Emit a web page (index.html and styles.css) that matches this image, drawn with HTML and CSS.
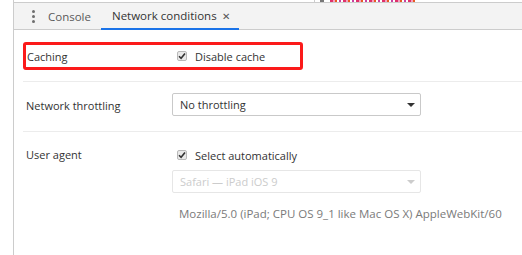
FILE: index.html
```html
<!DOCTYPE html>
<html>
<head>
<meta charset="utf-8">
<link rel="stylesheet" href="styles.css">
</head>
<body>
<div class="frame">
  <div class="gutter"></div>
  <div class="main">
    <div class="topstrip"><div class="remnant"><span class="bar"></span><span class="mark"></span><span class="colors"></span></div></div>
    <div class="toolbar">
      <div class="menu"><span></span><span></span><span></span></div>
      <div class="tab">Console</div>
      <div class="tab active">Network conditions <span class="close">✕</span></div>
    </div>
    <div class="content">
      <div class="row caching">
        <div class="label">Caching</div>
        <label class="check"><span class="box"><svg viewBox="0 0 10 10" width="10" height="10"><path d="M2 5.2 L4.1 7.3 L8 2.6" fill="none" stroke="#333" stroke-width="1.6"/></svg></span>Disable cache</label>
      </div>
      <div class="row sep throttle">
        <div class="label">Network throttling</div>
        <div class="select">No throttling<span class="arrow"></span></div>
      </div>
      <div class="row sep ua">
        <div class="label">User agent</div>
        <div class="col">
          <label class="check"><span class="box"><svg viewBox="0 0 10 10" width="10" height="10"><path d="M2 5.2 L4.1 7.3 L8 2.6" fill="none" stroke="#333" stroke-width="1.6"/></svg></span>Select automatically</label>
          <div class="select disabled">Safari — iPad iOS 9<span class="arrow"></span></div>
          <div class="uastring">Mozilla/5.0 (iPad; CPU OS 9_1 like Mac OS X) AppleWebKit/60</div>
        </div>
      </div>
    </div>
  </div>
</div>
</body>
</html>
```
FILE: styles.css
```css
html, body { margin: 0; padding: 0; background: #fff; }
body { font-family: "Open Sans", "Noto Sans", sans-serif; font-size: 11px; color: #333; width: 522px; height: 255px; overflow: hidden; }
.frame { display: flex; height: 255px; }
.gutter { width: 13px; border-right: 1px solid #ccc; flex: none; }
.main { flex: 1; display: flex; flex-direction: column; }
.topstrip { height: 2px; border-bottom: 1px solid #ccc; }
.remnant { display: flex; margin-left: 300px; height: 2px; }
.remnant .bar { width: 1px; background: #ccc; }
.remnant .mark { margin-left: 5px; width: 4px; background: #777; }
.remnant .colors { margin-left: 6px; width: 85px; background: repeating-linear-gradient(90deg, #e0306a 0 3px, #f5a0c0 3px 5px, #e85a20 5px 7px, #fff 7px 9px, #c840a0 9px 11px, #fff 11px 13px); }
.toolbar { height: 26px; background: #f3f3f3; border-bottom: 1px solid #ccc; display: flex; align-items: stretch; }
.menu { width: 10px; margin-left: 14px; display: flex; flex-direction: column; justify-content: center; align-items: center; gap: 2px; }
.menu span { width: 3px; height: 3px; background: #6e6e6e; border-radius: 50%; }
.tab { padding: 0 10px; display: flex; align-items: center; color: #5a5a5a; font-size: 11.5px; }
.tab:first-of-type { margin-left: 3px; }
.tab.active { color: #333; border-bottom: 2px solid #1a73e8; margin-bottom: -1px; padding: 0 9px 0 11px; }
.close { font-size: 10px; margin-left: 5px; color: #555; }
.content { padding: 0 0 0 9px; }
.row { display: flex; padding-left: 3px; }
.label { width: 146px; flex: none; }
.caching { margin-top: 12px; height: 22px; width: 273px; border: 3px solid #fb1a1a; border-radius: 3px; align-items: center; padding-left: 1px; }
.caching .label { width: 150px; }
.sep { border-top: 1px solid #ececec; }
.throttle { margin-top: 11px; padding-top: 11px; height: 50px; box-sizing: border-box; }
.throttle .label { line-height: 25px; }
.check { display: flex; align-items: center; }
.box { width: 10px; height: 10px; border: 1px solid #b9b9b9; border-radius: 2px; background: #e9e9e9; margin-right: 8px; display: flex; box-sizing: border-box; }
.box svg { margin: -1px; }
.select { width: 249px; height: 23px; box-sizing: border-box; border: 1px solid #c9c9c9; border-radius: 2px; background: #fff; display: flex; align-items: center; padding-left: 7px; position: relative; }
.arrow { position: absolute; right: 5px; top: 9px; border-left: 4px solid transparent; border-right: 4px solid transparent; border-top: 4px solid #333; }
.ua { padding-top: 16px; }
.ua .label { line-height: 14px; }
.col { display: flex; flex-direction: column; }
.ua .check { height: 14px; margin-left: 5px; }
.select.disabled { margin-top: 8px; color: #ccc; border-color: #e6e6e6; }
.select.disabled .arrow { border-top-color: #ccc; }
.uastring { margin-top: 13px; padding-left: 7px; color: #7a7a7a; white-space: nowrap; font-size: 11.5px; }
```
